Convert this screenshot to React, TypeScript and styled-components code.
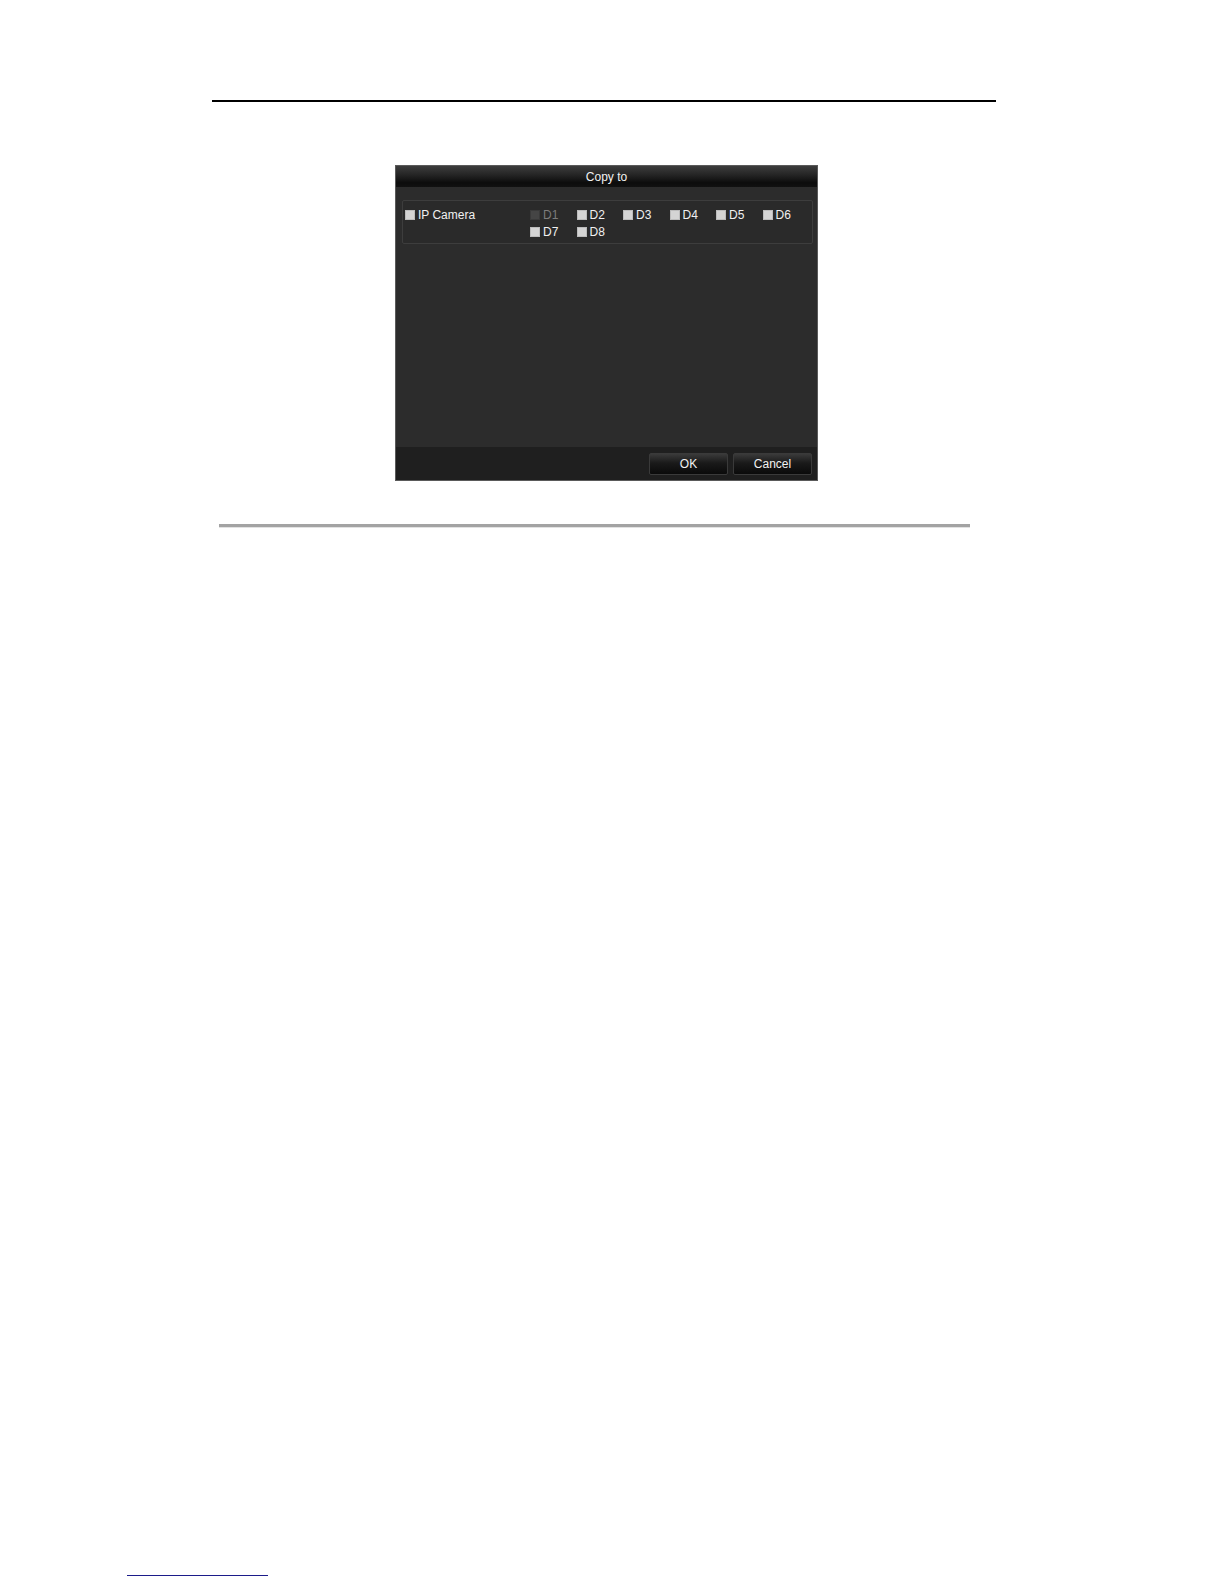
import React from 'react';
import styled, { createGlobalStyle } from 'styled-components';

const GlobalStyle = createGlobalStyle`
  html, body {
    margin: 0;
    padding: 0;
    background: #ffffff;
    overflow: hidden;
  }
  body {
    font-family: "Liberation Sans", Arial, sans-serif;
  }
`;

const Page = styled.div`
  width: 100%;
  height: 100vh;
  padding-top: 100px;
  box-sizing: border-box;
  display: flex;
  flex-direction: column;
`;

const HeaderRule = styled.div`
  margin-left: 212px;
  width: 784px;
  height: 2px;
  background: #000;
`;

const Dialog = styled.div`
  margin-top: 63px;
  margin-left: 395px;
  width: 423px;
  height: 316px;
  background: #2b2b2b;
  border: 1px solid #5a5a5a;
  box-sizing: border-box;
  display: flex;
  flex-direction: column;
`;

const TitleBar = styled.div`
  height: 21px;
  background: linear-gradient(to bottom, #3c3c3c 0%, #262626 40%, #0c0c0c 80%, #111 100%);
  color: #f2f2f2;
  font-size: 12px;
  display: flex;
  align-items: center;
  justify-content: center;
`;

const Body = styled.div`
  flex: 1;
  padding: 13px 4px 0 6px;
  background: #2c2c2c;
`;

const GroupBox = styled.div`
  height: 44px;
  box-sizing: border-box;
  border: 1px solid #3d3d3d;
  border-radius: 2px;
  background: #2a2a2a;
  display: flex;
  padding: 8px 0 0 2px;
`;

const GroupLabel = styled.div`
  width: 125px;
  display: flex;
  align-items: flex-start;
`;

const ChannelGrid = styled.div`
  display: grid;
  grid-template-columns: repeat(6, 46.5px);
  row-gap: 5px;
  align-content: start;
`;

const Check = styled.label<{ $disabled?: boolean }>`
  display: flex;
  align-items: center;
  gap: 3px;
  height: 12px;
  font-size: 12px;
  color: ${p => (p.$disabled ? '#7c7c7c' : '#f0f0f0')};
`;

const Box = styled.span<{ $disabled?: boolean }>`
  width: 10px;
  height: 10px;
  background: ${p => (p.$disabled ? '#454545' : '#d4d4d4')};
  border: 1px solid ${p => (p.$disabled ? '#3a3a3a' : '#bcbcbc')};
  box-sizing: border-box;
  flex: none;
`;

const Footer = styled.div`
  height: 33px;
  background: #1f1f1f;
  display: flex;
  justify-content: flex-end;
  align-items: center;
  gap: 5px;
  padding-right: 5px;
`;

const Button = styled.button`
  width: 79px;
  height: 22px;
  padding: 0;
  border: 1px solid #3a3a3a;
  border-radius: 2px;
  background: linear-gradient(to bottom, #3a3a3a 0%, #1a1a1a 45%, #0a0a0a 100%);
  color: #f2f2f2;
  font-family: "Liberation Sans", Arial, sans-serif;
  font-size: 12px;
`;

const FigureRule = styled.div`
  margin-top: 43px;
  margin-left: 219px;
  width: 751px;
  height: 3px;
  background: #a3a3a3;
  border-bottom: 1px solid #e2e2e2;
`;

const Spacer = styled.div`
  flex: 1;
`;

const FootnoteRule = styled.div`
  margin-left: 127px;
  margin-bottom: 8px;
  width: 141px;
  height: 1px;
  background: #1c1c8a;
`;

const channels = ['D1', 'D2', 'D3', 'D4', 'D5', 'D6', 'D7', 'D8'];

export default function App() {
  return (
    <>
      <GlobalStyle />
      <Page>
        <HeaderRule />
        <Dialog>
          <TitleBar>Copy to</TitleBar>
          <Body>
            <GroupBox>
              <GroupLabel>
                <Check>
                  <Box />
                  IP Camera
                </Check>
              </GroupLabel>
              <ChannelGrid>
                {channels.map(c => (
                  <Check key={c} $disabled={c === 'D1'}>
                    <Box $disabled={c === 'D1'} />
                    {c}
                  </Check>
                ))}
              </ChannelGrid>
            </GroupBox>
          </Body>
          <Footer>
            <Button>OK</Button>
            <Button>Cancel</Button>
          </Footer>
        </Dialog>
        <FigureRule />
        <Spacer />
        <FootnoteRule />
      </Page>
    </>
  );
}
